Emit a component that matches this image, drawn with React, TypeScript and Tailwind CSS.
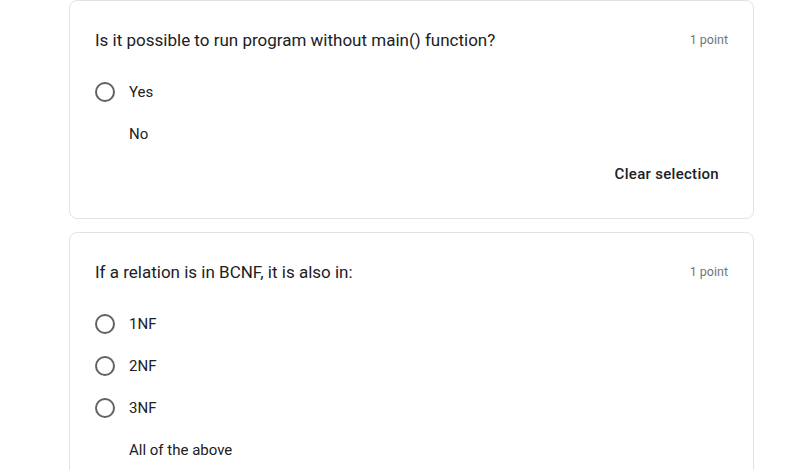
const Radio = ({ label, hidden }: { label: string; hidden?: boolean }) => (
  <div className="flex h-[42px] items-center">
    <span
      className={
        hidden
          ? "h-5 w-5 shrink-0"
          : "h-5 w-5 shrink-0 rounded-full border-2 border-[#5f6368]"
      }
    />
    <span className="ml-[14px] text-[15px] leading-5 text-[#202124]">{label}</span>
  </div>
);

interface QuestionProps {
  title: string;
  options: { label: string; hidden?: boolean }[];
  clear?: boolean;
}

const Question = ({ title, options, clear }: QuestionProps) => (
  <div className="w-[685px] rounded-lg border border-[#e3e3e3] bg-white px-[25px] pt-[27px] pb-[32px]">
    <div className="flex h-6 items-center justify-between">
      <h2 className="text-[17px] leading-6 text-[#202124]">{title}</h2>
      <span className="text-[12.5px] text-[#70757a]">1 point</span>
    </div>
    <div className="mt-[19px]">
      {options.map((o) => (
        <Radio key={o.label} label={o.label} hidden={o.hidden} />
      ))}
    </div>
    {clear && (
      <div className="mt-[7px] flex h-6 items-center justify-end pr-[9px]">
        <span className="text-[15px] font-medium tracking-[0.3px] text-[#202124]">
          Clear selection
        </span>
      </div>
    )}
  </div>
);

export default function App() {
  return (
    <div
      className="flex h-[470px] w-[812px] flex-col gap-[13px] overflow-hidden bg-white pl-[69px]"
      style={{ fontFamily: "Roboto, 'Liberation Sans', sans-serif" }}
    >
      <Question
        title="Is it possible to run program without main() function?"
        options={[{ label: "Yes" }, { label: "No", hidden: true }]}
        clear
      />
      <Question
        title="If a relation is in BCNF, it is also in:"
        options={[
          { label: "1NF" },
          { label: "2NF" },
          { label: "3NF" },
          { label: "All of the above", hidden: true },
        ]}
      />
    </div>
  );
}
